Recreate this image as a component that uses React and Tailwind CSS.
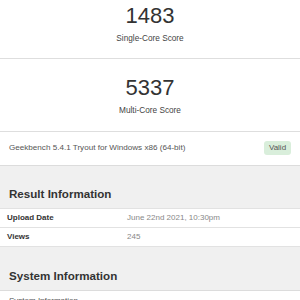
export default function App() {
  const font = { fontFamily: '"Liberation Sans", Arial, sans-serif' };
  return (
    <div className="w-[300px] h-[300px] overflow-hidden bg-[#f0f0f0] text-[#333]" style={font}>
      <div className="bg-white">
        <div className="flex flex-col items-center pt-[5px] pb-[15px] border-b border-[#dedede]">
          <div className="text-[22px] leading-[22px] text-[#333]">1483</div>
          <div className="mt-[8px] text-[8.25px] leading-[8.25px] text-[#444]">Single-Core Score</div>
        </div>
        <div className="flex flex-col items-center pt-[18px] pb-[15px] border-b border-[#dedede]">
          <div className="text-[22px] leading-[22px] text-[#333]">5337</div>
          <div className="mt-[8px] text-[8.25px] leading-[8.25px] text-[#444]">Multi-Core Score</div>
        </div>
        <div className="flex items-center justify-between h-[34px] pl-[9px] pr-[9px] border-b border-[#dcdcdc]">
          <span className="text-[8.1px] text-[#555]">Geekbench 5.4.1 Tryout for Windows x86 (64-bit)</span>
          <span className="flex items-center justify-center w-[27px] h-[14px] rounded-[3px] bg-[#d9eedb] text-[8px] text-[#555]">Valid</span>
        </div>
      </div>
      <div className="pt-[22px] pb-[9px] pl-[9px]">
        <div className="text-[11.6px] leading-[11.6px] font-bold text-[#333]">Result Information</div>
      </div>
      <div className="bg-white border-t border-[#e2e2e2]">
        <div className="flex items-center h-[19px] border-b border-[#e2e2e2]">
          <span className="w-[127px] pl-[7px] text-[8px] font-bold text-[#333]">Upload Date</span>
          <span className="text-[8px] text-[#888]">June 22nd 2021, 10:30pm</span>
        </div>
        <div className="flex items-center h-[19px] border-b border-[#e2e2e2]">
          <span className="w-[127px] pl-[7px] text-[8px] font-bold text-[#333]">Views</span>
          <span className="text-[8px] text-[#888]">245</span>
        </div>
      </div>
      <div className="pt-[23px] pb-[8px] pl-[9px]">
        <div className="text-[11.6px] leading-[11.6px] font-bold text-[#333]">System Information</div>
      </div>
      <div className="bg-white border-t border-[#dcdcdc]">
        <div className="flex items-center h-[21px] pl-[9px]">
          <span className="text-[8px] text-[#555]">System Information</span>
        </div>
      </div>
    </div>
  );
}
